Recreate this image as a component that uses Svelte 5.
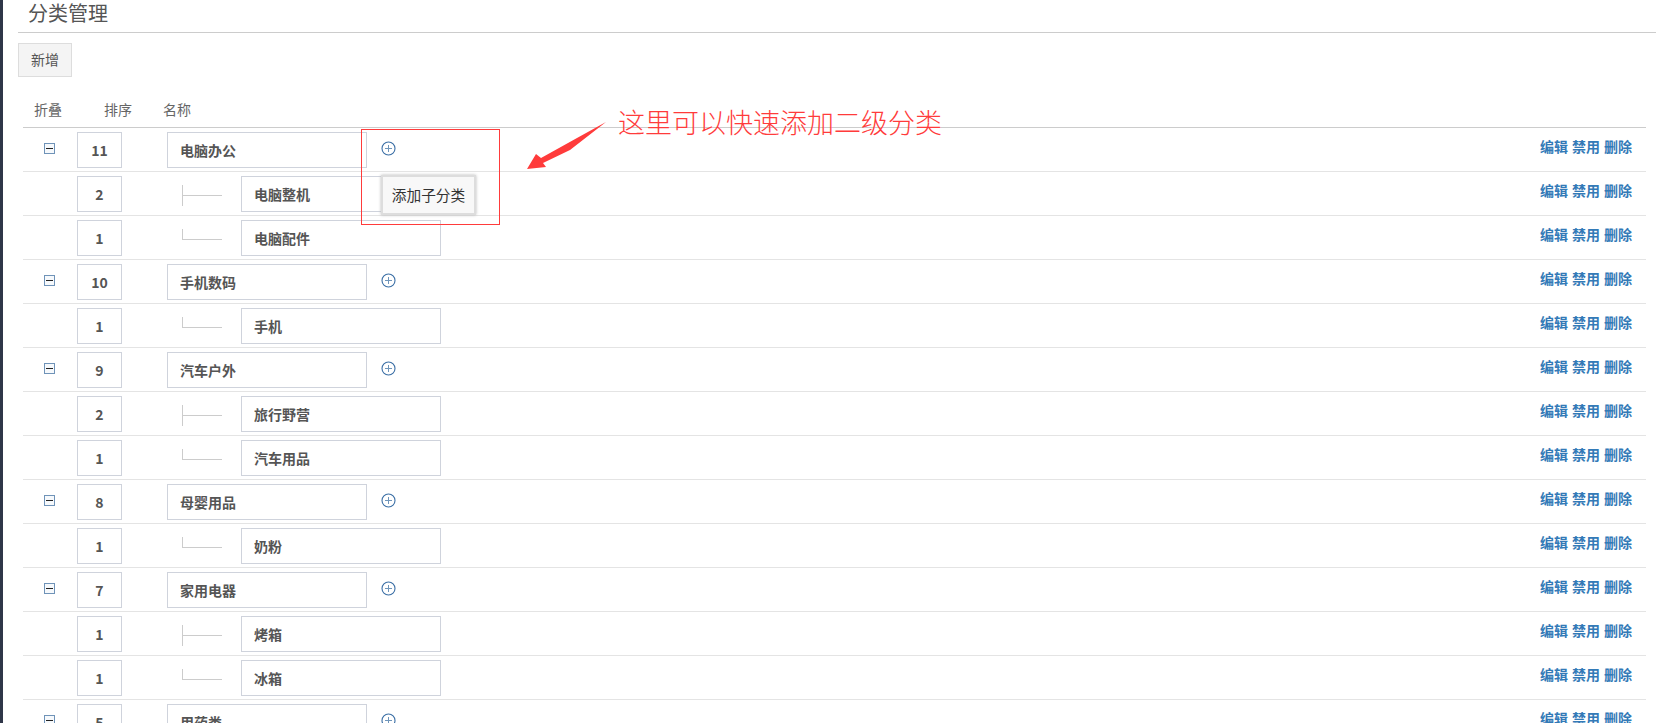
<script>
  const rows = [
    { sort: 11, name: '电脑办公', level: 0 },
    { sort: 2, name: '电脑整机', level: 1 },
    { sort: 1, name: '电脑配件', level: 2 },
    { sort: 10, name: '手机数码', level: 0 },
    { sort: 1, name: '手机', level: 2 },
    { sort: 9, name: '汽车户外', level: 0 },
    { sort: 2, name: '旅行野营', level: 1 },
    { sort: 1, name: '汽车用品', level: 2 },
    { sort: 8, name: '母婴用品', level: 0 },
    { sort: 1, name: '奶粉', level: 2 },
    { sort: 7, name: '家用电器', level: 0 },
    { sort: 1, name: '烤箱', level: 1 },
    { sort: 1, name: '冰箱', level: 2 },
    { sort: 5, name: '用药类', level: 0 }
  ];
</script>

<div class="page">
  <h1 class="title">分类管理</h1>
  <button class="add">新增</button>

  <div class="table">
    <div class="head">
      <span class="h-fold">折叠</span>
      <span class="h-sort">排序</span>
      <span>名称</span>
    </div>
    {#each rows as row}
      <div class="row">
        <div class="fold">
          {#if row.level === 0}
            <svg width="11" height="11" viewBox="0 0 11 11">
              <rect x="0.5" y="0.5" width="10" height="10" fill="#f6f9fc" stroke="#6f93b8" />
              <path d="M2 5.5h7" stroke="#222" />
            </svg>
          {/if}
        </div>
        <input class="sort" value={row.sort} readonly />
        {#if row.level === 0}
          <input class="name top" value={row.name} readonly />
          <svg class="plus" width="15" height="15" viewBox="0 0 15 15">
            <circle cx="7.5" cy="7.5" r="6.5" fill="none" stroke="#3a6ea5" stroke-width="1.1" />
            <path d="M7.5 4v7M4 7.5h7" stroke="#6f95ba" />
          </svg>
        {:else}
          <div class="tree" class:last={row.level === 2}></div>
          <input class="name" value={row.name} readonly />
        {/if}
        <div class="ops">
          <a href="#edit">编辑</a>
          <a href="#ban">禁用</a>
          <a href="#del">删除</a>
        </div>
      </div>
    {/each}
  </div>

  <div class="tip">添加子分类</div>
  <div class="mark"></div>
  <svg class="arrow" width="90" height="60" viewBox="0 0 90 60">
    <polygon points="86,2 50,30 23,43 26,47 7,49 16,34 21,38 57,18" fill="#ff3b3b" />
  </svg>
  <div class="note">这里可以快速添加二级分类</div>
</div>

<style>
  :global(body) {
    margin: 0;
    overflow: hidden;
    background: #fff;
  }

  .page {
    position: relative;
    box-sizing: border-box;
    height: 723px;
    overflow: hidden;
    border-left: 3px solid #2f3648;
    padding-left: 15px;
    font-family: "Noto Sans CJK SC", "Liberation Sans", sans-serif;
    font-size: 14px;
    color: #555;
  }

  .title {
    box-sizing: border-box;
    height: 33px;
    margin: 0;
    padding-left: 10px;
    border-bottom: 1px solid #ccc;
    font-size: 20px;
    font-weight: 400;
    line-height: 25px;
    color: #555;
  }

  .add {
    display: block;
    box-sizing: border-box;
    width: 54px;
    height: 34px;
    margin-top: 10px;
    padding: 0 0 2px;
    border: 1px solid #ddd;
    background: #f4f4f4;
    font: inherit;
    color: #555;
  }

  .table {
    margin: 20px 10px 0 5px;
  }

  .head {
    display: flex;
    height: 30px;
    padding-left: 11px;
    border-bottom: 1px solid #ccc;
    line-height: 24px;
    color: #666;
  }

  .h-fold {
    margin-right: 42px;
  }

  .h-sort {
    margin-right: 31px;
  }

  .row {
    display: flex;
    align-items: flex-start;
    box-sizing: border-box;
    height: 44px;
    padding-top: 4px;
    border-bottom: 1px solid #e4e4e4;
  }

  .fold {
    width: 54px;
    padding: 11px 0 0 21px;
    box-sizing: border-box;
    line-height: 0;
    flex: none;
  }

  input {
    box-sizing: border-box;
    height: 36px;
    border: 1px solid #cfd3dc;
    background: #fff;
    font: inherit;
    font-weight: 700;
    color: #555;
    outline: none;
  }

  .sort {
    width: 45px;
    margin-right: 45px;
    padding: 0;
    text-align: center;
  }

  .name {
    width: 200px;
    padding: 0 12px;
  }

  .tree {
    box-sizing: border-box;
    width: 40px;
    height: 21px;
    margin: 9px 19px 0 15px;
    border-left: 1px solid #ccc;
    background: linear-gradient(#ccc, #ccc) 0 10px / 100% 1px no-repeat;
  }

  .tree.last {
    height: 11px;
    border-bottom: 1px solid #ccc;
    background: none;
  }

  .plus {
    margin: 9px 0 0 14px;
    flex: none;
  }

  .ops {
    display: flex;
    gap: 4px;
    margin: 4px 14px 0 auto;
    line-height: 20px;
  }

  .ops a {
    color: #337ab7;
    font-weight: 700;
    text-decoration: none;
  }

  .tip {
    position: absolute;
    left: 378px;
    top: 175px;
    box-sizing: border-box;
    width: 95px;
    height: 40px;
    border: 2px solid #ddd;
    background: #f8f8f8;
    box-shadow: 0 0 3px #bbb;
    color: #333;
    font-size: 14.7px;
    line-height: 36px;
    text-align: center;
  }

  .mark {
    position: absolute;
    left: 358px;
    top: 129px;
    box-sizing: border-box;
    width: 139px;
    height: 96px;
    border: 1px solid #ff3b3b;
  }

  .arrow {
    position: absolute;
    left: 517px;
    top: 120px;
  }

  .note {
    position: absolute;
    left: 615px;
    top: 102px;
    color: #ff3b3b;
    font-size: 27px;
    font-weight: 300;
    line-height: 40px;
    white-space: nowrap;
  }
</style>
